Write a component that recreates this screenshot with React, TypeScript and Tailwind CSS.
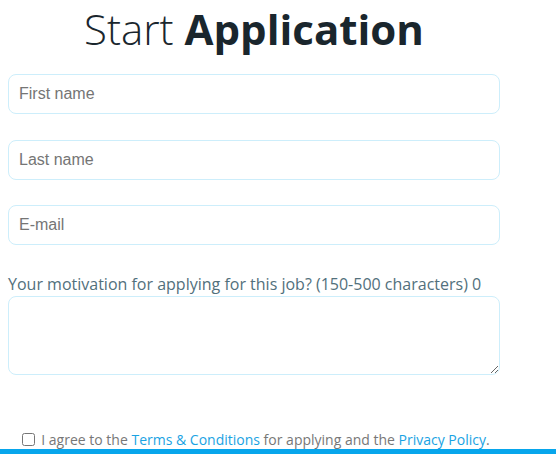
export default function App() {
  return (
    <div className="min-h-[454px] bg-white flex flex-col">
      <div className="w-[508px] px-2 flex flex-col">
        <h1 className="text-center text-[42px] leading-[57px] text-[#1a262d] font-['Open_Sans',sans-serif]">
          <span className="font-light">Start</span> <span className="font-bold">Application</span>
        </h1>

        <input
          type="text"
          placeholder="First name"
          className="mt-[17px] h-10 w-full rounded-lg border border-[#cdeefb] px-[10px] text-base font-['Liberation_Sans',Arial,sans-serif] placeholder:text-[#757575] outline-none"
        />
        <input
          type="text"
          placeholder="Last name"
          className="mt-[26px] h-10 w-full rounded-lg border border-[#cdeefb] px-[10px] text-base font-['Liberation_Sans',Arial,sans-serif] placeholder:text-[#757575] outline-none"
        />
        <input
          type="email"
          placeholder="E-mail"
          className="mt-[25px] h-10 w-full rounded-lg border border-[#cdeefb] px-[10px] text-base font-['Liberation_Sans',Arial,sans-serif] placeholder:text-[#757575] outline-none"
        />

        <label className="mt-[27px] block text-base leading-6 text-[#52707c] font-['Open_Sans',sans-serif]">
          Your motivation for applying for this job? (150-500 characters) 0
        </label>
        <textarea className="block h-[79px] w-full rounded-lg border border-[#cdeefb] outline-none" />

        <p className="mt-[55px] pl-1 text-center text-sm leading-[19px] text-[#777] font-['Open_Sans',sans-serif]">
          <input type="checkbox" className="mr-[6px] h-[13px] w-[13px] align-[-1px]" />
          I agree to the <span className="text-[#1aa3e3]">Terms &amp; Conditions</span> for applying and the{' '}
          <span className="text-[#1aa3e3]">Privacy Policy</span>.
        </p>
      </div>
      <div className="h-[5px] w-full bg-[#07a6ec]" />
    </div>
  );
}
